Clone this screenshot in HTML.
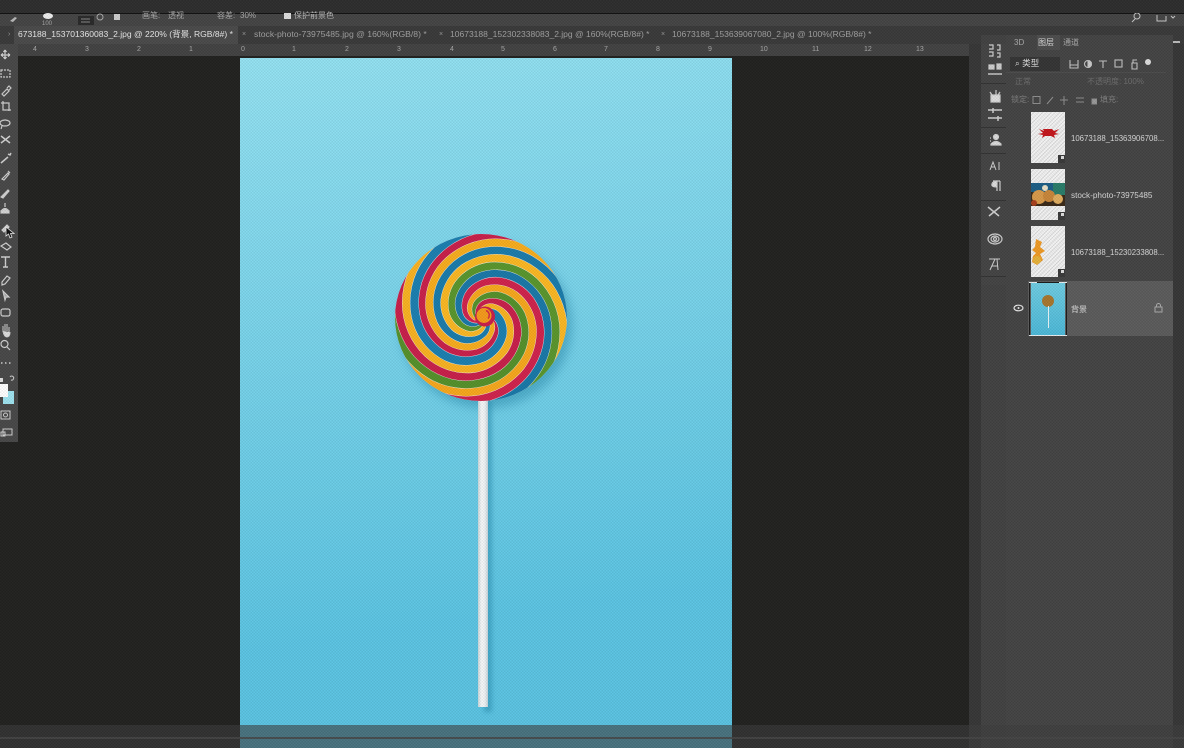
<!DOCTYPE html>
<html lang="zh"><head><meta charset="utf-8"><title>Photoshop</title>
<style>
*{box-sizing:border-box}
html,body{margin:0;padding:0;background:#222}
#p{position:relative;width:1184px;height:748px;overflow:hidden;background:#222220;font-family:"Liberation Sans","Noto Sans CJK SC",sans-serif;color:#c4c4c4}
.a{position:absolute}
.t{position:absolute;white-space:nowrap;line-height:1}
.rt{position:absolute;top:46px;font-size:7px;color:#a8a8a8;line-height:1}
.ic{position:absolute}
.th{position:absolute;left:1031px;width:34px;height:51px;background:repeating-linear-gradient(135deg,#f4f4f4 0 2px,#dedede 2px 3px)}
.bd{position:absolute;left:1058px;width:7px;height:8px;background:#3a3a3a}
.bd:after{content:"";position:absolute;left:3px;top:1px;width:3px;height:3px;background:#ddd}
</style></head><body>
<div id="p">
<!-- top bars -->
<div class="a" style="left:0;top:0;width:1184px;height:13px;background:#2e2e2e"></div>
<div class="a" style="left:0;top:13px;width:1184px;height:1px;background:#111"></div>
<div class="a" style="left:0;top:14px;width:1184px;height:12px;background:#454545"></div>
<div class="a" style="left:0;top:26px;width:1184px;height:18px;background:#3a3a3a"></div>
<div class="a" style="left:0;top:44px;width:969px;height:12px;background:#434343"></div>
<!-- options bar -->
<svg class="ic" style="left:4px;top:13px" width="360" height="13" viewBox="0 0 360 13">
<path d="M6 8l5-4 2 1-4 4z" fill="#bbb"/>
<ellipse cx="44" cy="3" rx="5" ry="3" fill="#eee"/>
<rect x="74" y="3" width="16" height="9" fill="#2a2a2a"/><path d="M77 6h9M77 9h9" stroke="#888"/>
<circle cx="96" cy="4" r="3" fill="none" stroke="#aaa"/>
<rect x="110" y="1" width="6" height="6" fill="#ccc"/>
</svg>
<div class="t" style="left:42px;top:21px;font-size:6px;color:#aaa">100</div>
<div class="t" style="left:142px;top:12px;font-size:8px;color:#aaa">画笔:</div>
<div class="t" style="left:168px;top:12px;font-size:8px;color:#aaa">透视</div>
<div class="t" style="left:217px;top:12px;font-size:8px;color:#aaa">容差:</div>
<div class="t" style="left:240px;top:12px;font-size:8px;color:#aaa">30%</div>
<div class="a" style="left:284px;top:13px;width:7px;height:6px;background:#ddd"></div>
<div class="t" style="left:294px;top:12px;font-size:8px;color:#bbb">保护前景色</div>
<!-- tabs -->
<div class="a" style="left:14px;top:26px;width:224px;height:18px;background:#4a4a4a"></div>
<div class="t" style="left:8px;top:31px;font-size:7px;color:#999">›</div>
<div class="t" style="left:18px;top:30px;font-size:8.55px;color:#e8e8e8">673188_153701360083_2.jpg @ 220% (背景, RGB/8#) *</div>
<div class="t" style="left:242px;top:31px;font-size:7px;color:#999">×</div>
<div class="t" style="left:254px;top:30px;font-size:8.65px;color:#a0a0a0">stock-photo-73975485.jpg @ 160%(RGB/8) *</div>
<div class="t" style="left:439px;top:31px;font-size:7px;color:#999">×</div>
<div class="t" style="left:450px;top:30px;font-size:8.53px;color:#a0a0a0">10673188_152302338083_2.jpg @ 160%(RGB/8#) *</div>
<div class="t" style="left:661px;top:31px;font-size:7px;color:#999">×</div>
<div class="t" style="left:672px;top:30px;font-size:8.53px;color:#a0a0a0">10673188_153639067080_2.jpg @ 100%(RGB/8#) *</div>
<!-- ruler -->
<span class="rt" style="left:33px">4</span><span class="rt" style="left:85px">3</span><span class="rt" style="left:137px">2</span><span class="rt" style="left:189px">1</span><span class="rt" style="left:241px">0</span><span class="rt" style="left:292px">1</span><span class="rt" style="left:345px">2</span><span class="rt" style="left:397px">3</span><span class="rt" style="left:450px">4</span><span class="rt" style="left:501px">5</span><span class="rt" style="left:553px">6</span><span class="rt" style="left:604px">7</span><span class="rt" style="left:656px">8</span><span class="rt" style="left:708px">9</span><span class="rt" style="left:760px">10</span><span class="rt" style="left:812px">11</span><span class="rt" style="left:864px">12</span><span class="rt" style="left:916px">13</span>
<!-- canvas image -->
<div class="a" style="left:240px;top:58px;width:492px;height:690px;background:linear-gradient(172deg,#94e2f2 0%,#84d9ee 22%,#70cfe8 50%,#5cc5e3 78%,#5ac3e2 100%)"></div>
<div class="a" style="left:400px;top:242px;width:172px;height:166px;border-radius:50%;background:#2f8fb0;filter:blur(5px);opacity:.55"></div>
<div class="a" style="left:484px;top:400px;width:8px;height:312px;background:#2f92b4;filter:blur(2px);opacity:.6"></div>
<div class="a" style="left:478px;top:398px;width:10px;height:309px;background:linear-gradient(90deg,#c9d6da,#f7f9fa 35%,#eef2f4 70%,#c3d2d8)"></div>
<!-- lollipop -->
<svg class="ic" style="left:395px;top:234px" width="172" height="167" viewBox="-86 -83.5 172 167">
<defs>
<clipPath id="c"><ellipse cx="0" cy="0" rx="86" ry="83.5"/></clipPath>
<path id="s" fill="none" d="M112 0A106 106 0 0 0 70.700 -70.700A94 94 0 0 0 0 -88A82 82 0 0 0 -53.700 -53.700A70 70 0 0 0 -64 0A58 58 0 0 0 -36.800 36.800A46 46 0 0 0 0 40A34 34 0 0 0 19.800 19.800A22 22 0 0 0 16 0A10 10 0 0 0 2.800 -2.800"/>
</defs>
<g clip-path="url(#c)">
<ellipse cx="0" cy="0" rx="86" ry="83.5" fill="#1f7fb0"/>
<g transform="rotate(26)"><use href="#s" stroke="#f0f0f0" stroke-width="9"/><use href="#s" stroke="#c9204a" stroke-width="8.200"/></g>
<g transform="rotate(56)"><use href="#s" stroke="#f0f0f0" stroke-width="9"/><use href="#s" stroke="#f8ad1e" stroke-width="8.200"/></g>
<g transform="rotate(86)"><use href="#s" stroke="#f0f0f0" stroke-width="9"/><use href="#s" stroke="#1b7cab" stroke-width="8.200"/></g>
<g transform="rotate(116)"><use href="#s" stroke="#f0f0f0" stroke-width="9"/><use href="#s" stroke="#fbb823" stroke-width="8.200"/></g>
<g transform="rotate(146)"><use href="#s" stroke="#f0f0f0" stroke-width="9"/><use href="#s" stroke="#5a962d" stroke-width="8.200"/></g>
<g transform="rotate(176)"><use href="#s" stroke="#f0f0f0" stroke-width="9"/><use href="#s" stroke="#1a78a8" stroke-width="8.200"/></g>
<g transform="rotate(206)"><use href="#s" stroke="#f0f0f0" stroke-width="9"/><use href="#s" stroke="#d0234c" stroke-width="8.200"/></g>
<g transform="rotate(236)"><use href="#s" stroke="#f0f0f0" stroke-width="9"/><use href="#s" stroke="#f7a81d" stroke-width="8.200"/></g>
<g transform="rotate(266)"><use href="#s" stroke="#f0f0f0" stroke-width="9"/><use href="#s" stroke="#55912b" stroke-width="8.200"/></g>
<g transform="rotate(296)"><use href="#s" stroke="#f0f0f0" stroke-width="9"/><use href="#s" stroke="#c8204a" stroke-width="8.200"/></g>
<g transform="rotate(326)"><use href="#s" stroke="#f0f0f0" stroke-width="9"/><use href="#s" stroke="#f9b322" stroke-width="8.200"/></g>
<g transform="rotate(356)"><use href="#s" stroke="#f0f0f0" stroke-width="9"/><use href="#s" stroke="#1c80b0" stroke-width="8.200"/></g>
<circle cx="4" cy="-1" r="10" fill="#c9204a"/>
<circle cx="3" cy="-2" r="7.500" fill="#f59a1c"/>
<path d="M5 -7a5 5 0 0 1 2 8" fill="none" stroke="#d42a44" stroke-width="1.500"/>
</g>
</svg>
<!-- toolbar -->
<div class="a" style="left:0;top:44px;width:18px;height:398px;background:#484848"></div>
<svg class="ic" style="left:0;top:46px" width="18" height="396" viewBox="0 0 18 396" fill="none" stroke="#d0d0d0" stroke-width="1.200">
<path d="M5 4v9M1 9h9M5 4l-1.500 2M5 4l1.500 2M5 13l-1.500-2M5 13l1.500-2M1 9l2-1.500M1 9l2 1.500M10 9l-2-1.500M10 9l-2 1.500"/>
<rect x="1" y="24" width="9" height="7" stroke-dasharray="2 1"/>
<path d="M2 48l5-5 2 2-5 5zM7 42l2-2 2 2-2 2"/>
<path d="M3 55v9h8M1 57h8v8"/>
<ellipse cx="5" cy="77" rx="5" ry="3"/><path d="M2 80l-1 3"/>
<path d="M1 90l9 7M10 90l-9 7" stroke-width="1.500"/>
<path d="M1 117l7-6M8 108l2 1 1-2" stroke-width="1.500"/>
<path d="M2 133l6-6 1 1-5 6zM8 125l2 2"/>
<path d="M1 151l7-7 1 1-6 7z" fill="#d0d0d0"/>
<path d="M5 157v4M2 164q3-3 6 0z" fill="#ddd"/><rect x="1" y="165" width="8" height="2" fill="#ddd"/>
<path d="M2 184l5-5 2 2-5 5z" fill="#ccc"/>
<path d="M1 200l5-3 5 4-4 3z"/>
<path d="M1 211h9M5.500 211v10M3 221h5" stroke-width="1.400"/>
<path d="M2 236l5-6 3 2-5 6-3 1z"/>
<path d="M3 245l6 6-3 0-1 3z" fill="#aaa"/>
<rect x="1" y="263" width="9" height="7" rx="2"/>
<path d="M3 286v-6M5 285v-7M7 285v-7M9 286v-5M3 285q1 6 4 6t3-5" fill="#ddd" stroke-width="1"/>
<circle cx="4.500" cy="298" r="3.500"/><path d="M7 301l3 3"/>
<path d="M1 317h1.500M5 317h1.500M9 317h1.500" stroke-width="1.500"/>
<path d="M10 331a2 2 0 1 1 1 3" stroke-width="1"/>
<rect x="1" y="365" width="9" height="8" stroke-width="1"/><circle cx="5.500" cy="369" r="2" stroke-width="1"/>
<path d="M3 383h9v6H3zM1 386h4v4H1z" stroke-width="1"/>
</svg>
<div class="a" style="left:3px;top:391px;width:11px;height:13px;background:#9fe3f0"></div>
<div class="a" style="left:0;top:384px;width:8px;height:13px;background:#fff"></div>
<div class="a" style="left:0;top:378px;width:3px;height:4px;background:#ddd"></div>
<svg class="ic" style="left:5px;top:226px" width="10" height="14" viewBox="0 0 10 14"><path d="M1 1v9l2.500-2 1.500 4 2-1-1.500-3.500H9z" fill="#111" stroke="#eee" stroke-width=".8"/></svg>
<!-- right side -->
<div class="a" style="left:969px;top:44px;width:215px;height:704px;background:#373737"></div>
<div class="a" style="left:981px;top:34px;width:25px;height:714px;background:#424242"></div>
<div class="a" style="left:981px;top:44px;width:25px;height:241px;background:#444"></div>
<div class="a" style="left:1006px;top:30px;width:167px;height:718px;background:#444"></div>
<div class="a" style="left:969px;top:26px;width:215px;height:9px;background:#3a3a3a"></div>
<div class="a" style="left:1037px;top:35px;width:23px;height:15px;background:#4e4e4e"></div>
<div class="t" style="left:1014px;top:39px;font-size:8px;color:#aaa">3D</div>
<div class="t" style="left:1038px;top:39px;font-size:8px;color:#ddd">图层</div>
<div class="t" style="left:1063px;top:39px;font-size:8px;color:#aaa">通道</div>
<div class="a" style="left:1173px;top:41px;width:7px;height:2px;background:#bbb"></div>
<div class="a" style="left:1010px;top:57px;width:50px;height:14px;background:#353535"></div>
<div class="t" style="left:1015px;top:59px;font-size:8.500px;color:#ddd">⌕ 类型</div>
<svg class="ic" style="left:1066px;top:57px" width="90" height="14" viewBox="0 0 90 14" fill="none" stroke="#c4c4c4" stroke-width="1.100">
<path d="M4 3v8h8V3M4 8h8"/><circle cx="22" cy="7" r="3.500"/><path d="M22 3.500a3.500 3.500 0 0 1 0 7z" fill="#ccc"/>
<path d="M33 4h8M37 4v7" /><rect x="49" y="3" width="7" height="7"/><path d="M66 6h5v6h-5zM67 6V3h4" />
<circle cx="82" cy="5" r="3" fill="#ddd" stroke="none"/>
</svg>
<div class="t" style="left:1015px;top:78px;font-size:8px;color:#6e6e6e">正常</div>
<div class="t" style="left:1087px;top:78px;font-size:8px;color:#6e6e6e">不透明度: 100%</div>
<div class="t" style="left:1011px;top:96px;font-size:8px;color:#808080">锁定:</div>
<svg class="ic" style="left:1032px;top:95px" width="65" height="11" viewBox="0 0 65 11" fill="none" stroke="#8f8f8f">
<rect x="1" y="1.500" width="7" height="7"/><path d="M15 9l6-7M32 1v9M28 5h8M44 3h8M44 7h8"/><rect x="60" y="4" width="5" height="5" fill="#9a9a9a"/>
</svg>
<div class="t" style="left:1100px;top:96px;font-size:8px;color:#808080">填充:</div>
<div class="a" style="left:1006px;top:72px;width:160px;height:1px;background:#4d4d4d"></div>
<!-- panel icons -->
<svg class="ic" style="left:985px;top:42px" width="20" height="234" viewBox="0 0 20 234" fill="none" stroke="#d0d0d0" stroke-width="1.200">
<path d="M4 3h4v4H4M12 3h3v5h-3M4 10h4v4H4M12 11h3v4h-3"/>
<path d="M3 32h14" stroke-width="1.400"/><rect x="4" y="23" width="5" height="4" fill="#ccc"/><rect x="12" y="22" width="4" height="5" fill="#ccc"/>
<path d="M5 50l2 3M11 48v5M15 50l-2 3"/><rect x="6" y="53" width="9" height="7" fill="#ddd"/>
<path d="M3 68h14M3 76h14M8 66v5M13 74v5" stroke-width="1.500"/>
<path d="M5 96h1M5 99h1"/><circle cx="11" cy="95" r="2.500" fill="#ddd"/><path d="M6 103h10v-1q-5-5-10 0z" fill="#ddd"/>
<path d="M5 128l3-8 3 8M6 125h4M14 120v8" stroke-width="1"/>
<path d="M8 139h7M12 139v10M15 139v10M12 145q-6 0-5-3t5-3" stroke-width="1.200" fill="#ddd"/>
<path d="M3 165l11 9M15 165L4 174" stroke-width="1.500"/>
<ellipse cx="10" cy="197" rx="7" ry="5"/><ellipse cx="10" cy="197" rx="4" ry="3"/><circle cx="10" cy="197" r="1.500"/>
<path d="M5 228l5-11h2l1 11M4 217h11M7 224h6" stroke-width="1"/>
</svg>
<div class="a" style="left:981px;top:83px;width:25px;height:1px;background:#333"></div>
<div class="a" style="left:981px;top:127px;width:25px;height:1px;background:#333"></div>
<div class="a" style="left:981px;top:153px;width:25px;height:1px;background:#333"></div>
<div class="a" style="left:981px;top:200px;width:25px;height:1px;background:#333"></div>
<div class="a" style="left:981px;top:276px;width:25px;height:1px;background:#333"></div>
<!-- layers -->
<div class="a" style="left:1028px;top:281px;width:145px;height:55px;background:#5c5c5c"></div>
<div class="th" style="top:112px"></div>
<svg class="ic" style="left:1037px;top:127px" width="23" height="14" viewBox="0 0 23 14"><path d="M6 2h9l2 2 5-2-4 4 4 1-5 1 1 3-4-2H8l-3 2 1-3-5-1 5-1-4-4 5 2z" fill="#c4161c"/></svg>
<div class="th" style="top:169px"></div>
<svg class="ic" style="left:1031px;top:183px" width="34" height="23" viewBox="0 0 34 23"><rect width="34" height="23" fill="#1d5f86"/><rect y="9" width="34" height="14" fill="#3a2a18"/><rect x="22" y="0" width="12" height="12" fill="#2a7d6a"/><circle cx="8" cy="14" r="7" fill="#d89a4a"/><circle cx="18" cy="13" r="6" fill="#c9873a"/><circle cx="27" cy="16" r="5" fill="#e0ad60"/><circle cx="14" cy="5" r="3" fill="#e9e2c8"/><circle cx="3" cy="20" r="3" fill="#a8401e"/></svg>
<div class="th" style="top:226px"></div>
<svg class="ic" style="left:1031px;top:238px" width="16" height="28" viewBox="0 0 16 28"><path d="M5 1l6 3-2 5 5 4-5 3 3 6-6 5-5-3 1-6 3-3-4-3 3-3z" fill="#ef9a26"/><circle cx="6" cy="22" r="4" fill="#e6b23a"/></svg>
<div class="a" style="left:1029px;top:282px;width:38px;height:54px;border:1px solid #1c1c1c"></div>
<div class="a" style="left:1029px;top:282px;width:8px;height:1px;background:#e8eef0"></div><div class="a" style="left:1059px;top:282px;width:8px;height:1px;background:#e8eef0"></div>
<div class="a" style="left:1029px;top:335px;width:38px;height:1px;background:#e8eef0"></div>
<div class="a" style="left:1031px;top:283px;width:34px;height:52px;background:linear-gradient(#6fcce2,#4db9d8)"></div>
<div class="a" style="left:1042px;top:295px;width:12px;height:12px;border-radius:50%;background:#a8762e"></div>
<div class="a" style="left:1047.500px;top:306px;width:1px;height:22px;background:#e8f4f7"></div>
<div class="bd" style="top:155px"></div>
<div class="bd" style="top:212px"></div>
<div class="bd" style="top:269px"></div>
<div class="t" style="left:1071px;top:135px;font-size:7.800px;color:#d8d8d8">10673188_15363906708...</div>
<div class="t" style="left:1071px;top:192px;font-size:8.200px;color:#d8d8d8">stock-photo-73975485</div>
<div class="t" style="left:1071px;top:249px;font-size:7.800px;color:#d8d8d8">10673188_15230233808...</div>
<div class="t" style="left:1071px;top:306px;font-size:8px;color:#e0e0e0">背景</div>
<svg class="ic" style="left:1013px;top:304px" width="11" height="8" viewBox="0 0 11 8"><ellipse cx="5.500" cy="4" rx="4.500" ry="2.800" fill="none" stroke="#e8e8e8" stroke-width="1.200"/><circle cx="5.500" cy="4" r="1" fill="#e8e8e8"/></svg>
<svg class="ic" style="left:1154px;top:303px" width="9" height="10" viewBox="0 0 9 10"><rect x="1" y="4" width="7" height="5" fill="none" stroke="#aaa"/><path d="M2.500 4V2.500a2 2 0 0 1 4 0V4" fill="none" stroke="#aaa"/></svg>
<!-- top right -->
<svg class="ic" style="left:1130px;top:13px" width="54" height="10" viewBox="0 0 54 10" fill="none" stroke="#c8c8c8"><circle cx="7" cy="3" r="3"/><path d="M5 6L2 9"/><path d="M27 2v6h9V3"/><path d="M41 3l2 2 2-2"/></svg>
<!-- bottom overlay -->
<div class="a" style="left:0;top:725px;width:1184px;height:23px;background:rgba(62,62,62,.6)"></div>
<div class="a" style="left:0;top:737px;width:1184px;height:2px;background:rgba(70,70,70,.85)"></div>
<!-- dither -->
<div class="a" style="left:0;top:0;width:1184px;height:748px;pointer-events:none;background:repeating-conic-gradient(rgba(0,0,0,.07) 0 25%,rgba(255,255,255,.02) 0 50%) 0 0/3px 3px"></div>
</div>
</body></html>
